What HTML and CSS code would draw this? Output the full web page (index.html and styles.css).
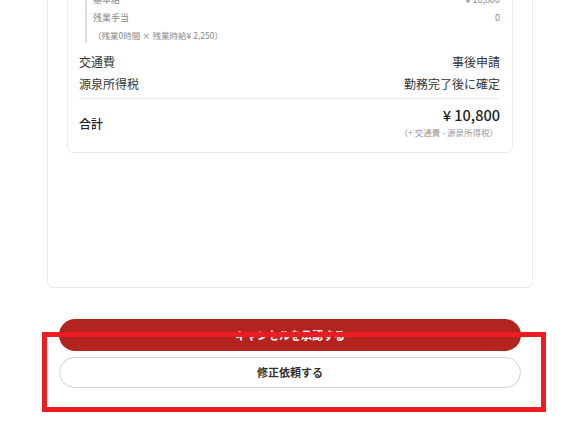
FILE: index.html
```html
<!DOCTYPE html>
<html lang="ja">
<head>
  <meta charset="UTF-8" />
  <meta name="viewport" content="width=device-width, initial-scale=1.0" />
  <title>給与明細</title>
  <link rel="stylesheet" href="styles.css">
</head>
<body>

  <main class="pagina">
    <section class="cartao">
      <div class="detalhe">
        <div class="linha">
          <span>給与</span>
          <span>¥ 10,800</span>
        </div>

        <!-- Breakdown -->
        <div class="quebra">
          <div class="sub-linha">
            <span>基本給</span>
            <span>¥ 10,800</span>
          </div>
          <div class="sub-linha">
            <span>残業手当</span>
            <span>0</span>
          </div>
          <div class="nota">（残業0時間 × 残業時給¥ 2,250）</div>
        </div>

        <div class="linha primeira">
          <span>交通費</span>
          <span>事後申請</span>
        </div>
        <div class="linha">
          <span>源泉所得税</span>
          <span>勤務完了後に確定</span>
        </div>

        <div class="total">
          <span class="total-titulo">合計</span>
          <div class="total-valor">
            <div class="valor">¥ 10,800</div>
            <div class="valor-nota">（+ 交通費 - 源泉所得税）</div>
          </div>
        </div>
      </div>
    </section>

    <div class="botoes">
      <a href="#" class="botao-aceitar">キャンセルを承認する</a>
      <a href="#" class="botao-corrigir">修正依頼する</a>
    </div>
  </main>

  <div class="destaque"></div>

</body>
</html>
```

FILE: styles.css
```css
body {
  font-family: "Noto Sans CJK JP", "Noto Sans", sans-serif;
  margin: 0;
  background-color: #fff;
  color: #333;
  overflow: hidden;
}

.pagina {
  width: 486px;
  margin-left: 47px;
}

.cartao {
  margin-top: -67px;
  border: 1px solid #e9e9e9;
  border-radius: 6px;
  padding: 19px 19px 134px;
}

.detalhe {
  border: 1px solid #ebebeb;
  border-radius: 6px;
  padding: 11px 12px 12px 11px;
}

.linha {
  display: flex;
  justify-content: space-between;
  font-size: 12px;
  line-height: 22px;
  color: #333;
}

.linha.primeira {
  margin-top: 8px;
}

.quebra {
  margin: 4px 0 0 6px;
  border-left: 2px solid #dcdcdc;
  padding-left: 6px;
}

.sub-linha {
  display: flex;
  justify-content: space-between;
  font-size: 9px;
  line-height: 18px;
  color: #888;
}

.nota {
  font-size: 8.5px;
  line-height: 16px;
  color: #888;
}

.total {
  display: flex;
  justify-content: space-between;
  align-items: center;
  margin-top: 3px;
  border-top: 1px solid #ececec;
  padding-top: 7px;
}

.total-titulo {
  font-size: 12px;
  font-weight: 500;
  color: #222;
}

.total-valor {
  text-align: right;
}

.valor {
  font-size: 14.5px;
  line-height: 18px;
  font-weight: 500;
  color: #222;
}

.valor-nota {
  font-size: 8.5px;
  line-height: 16px;
  color: #999;
  margin-right: 2px;
}

/* Botoes */
.botoes {
  display: flex;
  flex-direction: column;
  gap: 6px;
  margin: 31px 12px 0;
}

.botao-aceitar,
.botao-corrigir {
  display: block;
  text-align: center;
  text-decoration: none;
  font-size: 11px;
  font-weight: bold;
  border-radius: 16px;
}

.botao-aceitar {
  background-color: #b3241f;
  color: #fff;
  line-height: 32px;
}

.botao-corrigir {
  border: 1px solid #d2d2d2;
  color: #333;
  line-height: 29px;
}

/* Marcacao vermelha */
.destaque {
  position: absolute;
  left: 42px;
  top: 332px;
  width: 494px;
  height: 70px;
  border: 5px solid #ec1c24;
}
```
